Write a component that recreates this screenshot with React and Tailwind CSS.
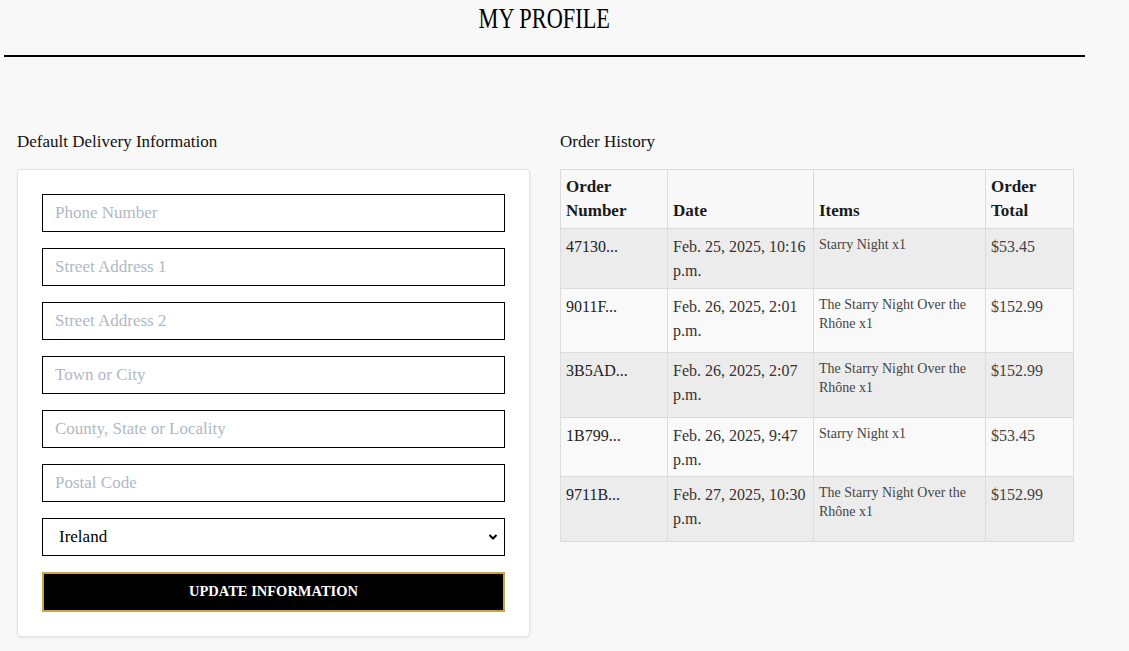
import React from "react";

const serif = { fontFamily: '"Liberation Serif", "Times New Roman", serif' };

const orders = [
  { num: "47130...", date: "Feb. 25, 2025, 10:16 p.m.", items: "Starry Night x1", total: "$53.45", h: "h-[60px]", bg: "bg-[#ececec]" },
  { num: "9011F...", date: "Feb. 26, 2025, 2:01 p.m.", items: "The Starry Night Over the Rhône x1", total: "$152.99", h: "h-[64px]", bg: "bg-[#f9f9f9]" },
  { num: "3B5AD...", date: "Feb. 26, 2025, 2:07 p.m.", items: "The Starry Night Over the Rhône x1", total: "$152.99", h: "h-[65px]", bg: "bg-[#ececec]" },
  { num: "1B799...", date: "Feb. 26, 2025, 9:47 p.m.", items: "Starry Night x1", total: "$53.45", h: "h-[59px]", bg: "bg-[#f9f9f9]" },
  { num: "9711B...", date: "Feb. 27, 2025, 10:30 p.m.", items: "The Starry Night Over the Rhône x1", total: "$152.99", h: "h-[65px]", bg: "bg-[#ececec]" },
];

const fields = ["Phone Number", "Street Address 1", "Street Address 2", "Town or City", "County, State or Locality", "Postal Code"];

export default function App() {
  return (
    <div className="min-h-[651px] w-full bg-[#f8f8f8] text-[#111]" style={serif}>
      <div className="ml-[4px] w-[1081px]">
        <div className="flex h-[55px] justify-center pt-[3px]">
          <h1 className="inline-block h-[30px] scale-x-[0.77] text-[29px] leading-[30px] text-black">MY PROFILE</h1>
        </div>
        <div className="h-[2px] bg-black" />
      </div>

      <div className="flex gap-[30px] pl-[17px] pt-[73px]">
        <div className="w-[513px]">
          <div className="mb-[15px] h-[24px] text-[17px] leading-[24px]">Default Delivery Information</div>
          <div className="rounded-[4px] border border-[#e2e2e2] bg-white p-[24px] shadow-[0_1px_3px_rgba(0,0,0,0.08)]">
            <div className="flex flex-col gap-[16px]">
              {fields.map((f) => (
                <input
                  key={f}
                  placeholder={f}
                  className="h-[38px] w-full border border-black bg-white px-[12px] text-[17px] outline-none placeholder:text-[#b0b8c4]"
                  style={serif}
                />
              ))}
              <div className="relative">
                <select
                  defaultValue="Ireland"
                  className="h-[38px] w-full appearance-none border border-black bg-white px-[16px] text-[17px] text-black outline-none"
                  style={serif}
                >
                  <option>Ireland</option>
                </select>
                <svg className="pointer-events-none absolute right-[7px] top-[14px]" width="10" height="10" viewBox="0 0 10 10">
                  <path d="M1.5 3 L5 6.5 L8.5 3" fill="none" stroke="black" strokeWidth="2" />
                </svg>
              </div>
              <button className="h-[40px] w-full border-2 border-[#c8a546] bg-black text-[14.5px] font-bold text-white" style={serif}>
                UPDATE INFORMATION
              </button>
            </div>
          </div>
        </div>

        <div className="w-[513px]">
          <div className="mb-[15px] h-[24px] text-[17px] leading-[24px]">Order History</div>
          <table className="w-[513px] table-fixed border-collapse border border-[#dcdcdc] text-[#222]">
            <colgroup>
              <col className="w-[107px]" />
              <col className="w-[146px]" />
              <col className="w-[172px]" />
              <col className="w-[88px]" />
            </colgroup>
            <thead>
              <tr className="h-[59px] bg-[#f8f8f8]">
                {[["Order", "Number"], ["Date"], ["Items"], ["Order", "Total"]].map((h, i) => (
                  <th key={i} className="border border-[#dcdcdc] px-[5px] pb-[5px] text-left align-bottom text-[17px] font-bold leading-[24px] text-[#1a1a1a]">
                    {h.map((l) => (
                      <div key={l}>{l}</div>
                    ))}
                  </th>
                ))}
              </tr>
            </thead>
            <tbody>
              {orders.map((o, i) => (
                <tr key={i} className={`${o.h} ${o.bg}`}>
                  <td className="border border-[#dcdcdc] px-[5px] pt-[6px] align-top text-[16px] leading-[24px] text-[#222]">{o.num}</td>
                  <td className="border border-[#dcdcdc] px-[5px] pt-[6px] align-top text-[16px] leading-[24px] text-[#333]">{o.date}</td>
                  <td className="border border-[#dcdcdc] px-[5px] pt-[6px] align-top text-[14px] leading-[19px] text-[#444]">{o.items}</td>
                  <td className="border border-[#dcdcdc] px-[5px] pt-[6px] align-top text-[16px] leading-[24px] text-[#444]">{o.total}</td>
                </tr>
              ))}
            </tbody>
          </table>
        </div>
      </div>
    </div>
  );
}
